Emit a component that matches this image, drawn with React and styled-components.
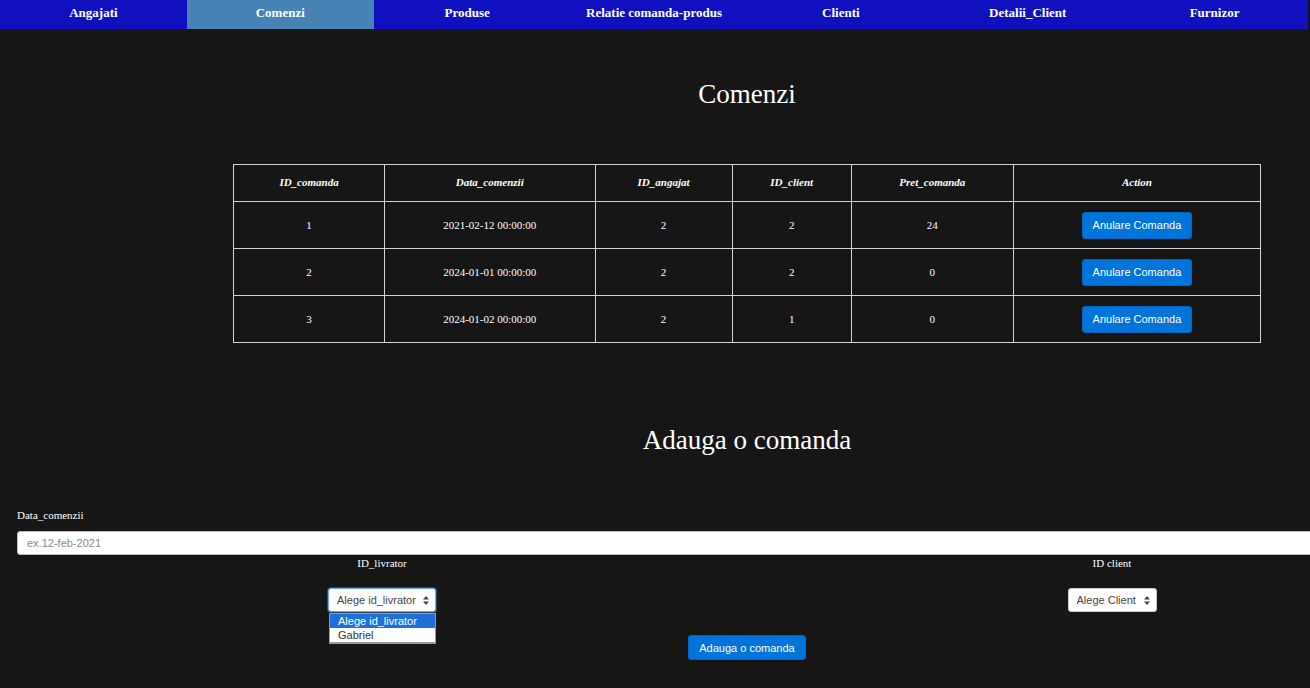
import React from 'react';
import styled, { createGlobalStyle } from 'styled-components';

const tabs = [
  'Angajati',
  'Comenzi',
  'Produse',
  'Relatie comanda-produs',
  'Clienti',
  'Detalii_Client',
  'Furnizor',
];

const columns = [
  { title: 'ID_comanda', width: 151 },
  { title: 'Data_comenzii', width: 211 },
  { title: 'ID_angajat', width: 137 },
  { title: 'ID_client', width: 119 },
  { title: 'Pret_comanda', width: 162 },
  { title: 'Action', width: 248 },
];

const orders = [
  { id: 1, data: '2021-02-12 00:00:00', angajat: 2, client: 2, pret: 24 },
  { id: 2, data: '2024-01-01 00:00:00', angajat: 2, client: 2, pret: 0 },
  { id: 3, data: '2024-01-02 00:00:00', angajat: 2, client: 1, pret: 0 },
];

const Caret = () => (
  <svg width='6' height='9' viewBox='0 0 6 9'>
    <path d='M3 0 L6 3.5 H0 Z M3 9 L6 5.5 H0 Z' fill='#444' />
  </svg>
);

const App = () => {
  return (
    <>
      <GlobalStyle />
      <Screen>
        <Nav>
          {tabs.map((t) => (
            <NavItem key={t} $active={t === 'Comenzi'}>
              {t}
            </NavItem>
          ))}
        </Nav>
        <Page>
          <Title>Comenzi</Title>
          <Table>
            <thead>
              <tr>
                {columns.map((c) => (
                  <Th key={c.title} $width={c.width}>
                    {c.title}
                  </Th>
                ))}
              </tr>
            </thead>
            <tbody>
              {orders.map((o) => (
                <tr key={o.id}>
                  <Td>{o.id}</Td>
                  <Td>{o.data}</Td>
                  <Td>{o.angajat}</Td>
                  <Td>{o.client}</Td>
                  <Td>{o.pret}</Td>
                  <Td>
                    <BlueButton>Anulare Comanda</BlueButton>
                  </Td>
                </tr>
              ))}
            </tbody>
          </Table>

          <Title $gap={82}>Adauga o comanda</Title>
          <Form>
            <Label>Data_comenzii</Label>
            <TextInput placeholder='ex.12-feb-2021' />
            <Pickers>
              <Picker>
                <Label>ID_livrator</Label>
                <SelectWrap>
                  <Select $focused>
                    <option>Alege id_livrator</option>
                    <option>Gabriel</option>
                  </Select>
                  <CaretSpot>
                    <Caret />
                  </CaretSpot>
                  <Options>
                    <Option $selected>Alege id_livrator</Option>
                    <Option>Gabriel</Option>
                  </Options>
                </SelectWrap>
              </Picker>
              <Picker>
                <Label>ID client</Label>
                <SelectWrap>
                  <Select>
                    <option>Alege Client</option>
                  </Select>
                  <CaretSpot>
                    <Caret />
                  </CaretSpot>
                </SelectWrap>
              </Picker>
            </Pickers>
            <SubmitRow>
              <BlueButton $height={25}>Adauga o comanda</BlueButton>
            </SubmitRow>
          </Form>
        </Page>
      </Screen>
    </>
  );
};

const GlobalStyle = createGlobalStyle`
  html, body {
    margin: 0;
    background: #161616;
    overflow: hidden;
  }
  body {
    font-family: "Liberation Serif", "Times New Roman", serif;
    color: #fff;
  }
`;

const Screen = styled.div`
  width: 1310px;
  height: 688px;
  overflow: hidden;
  background: #161616;
`;

const Nav = styled.nav`
  display: grid;
  grid-template-columns: repeat(7, 1fr);
  width: 1308px;
  height: 29px;
  background: #1010bf;
`;

const NavItem = styled.div`
  display: flex;
  align-items: center;
  justify-content: center;
  padding-bottom: 3px;
  font-size: 13px;
  font-weight: bold;
  color: #fff;
  background: ${(p) => (p.$active ? '#4682b4' : 'transparent')};
`;

const Page = styled.main`
  width: 1460px;
  margin-left: 17px;
`;

const Title = styled.h2`
  margin: ${(p) => p.$gap || 50}px 0 0;
  font-size: 27px;
  line-height: 31px;
  font-weight: normal;
  text-align: center;
  color: #fff;
`;

const Table = styled.table`
  width: 1028px;
  margin: 54px auto 0;
  border-collapse: collapse;
  font-size: 11px;
  color: #fff;
  th,
  td {
    border: 1px solid #d4d4d4;
    text-align: center;
  }
`;

const Th = styled.th`
  width: ${(p) => p.$width}px;
  height: 34px;
  padding: 0 0 2px;
  font-style: italic;
  font-weight: bold;
`;

const Td = styled.td`
  height: 46px;
  padding: 0;
`;

const BlueButton = styled.button`
  height: ${(p) => p.$height || 27}px;
  padding: 0 10px;
  border: 1px solid #0068c4;
  border-radius: 3px;
  background: #0074d9;
  color: #fff;
  font-family: "Liberation Sans", Arial, sans-serif;
  font-size: 11px;
  cursor: pointer;
`;

const Form = styled.form`
  display: flex;
  flex-direction: column;
  margin-top: 53px;
`;

const Label = styled.label`
  display: block;
  font-size: 11px;
  line-height: 13px;
  color: #fff;
`;

const TextInput = styled.input`
  box-sizing: border-box;
  width: 100%;
  height: 24px;
  margin-top: 9px;
  padding: 0 9px;
  border: 1px solid #bbb;
  border-radius: 3px;
  background: #fff;
  font-family: "Liberation Sans", Arial, sans-serif;
  font-size: 11px;
  &::placeholder {
    color: #8a8a8a;
  }
`;

const Pickers = styled.div`
  display: grid;
  grid-template-columns: 1fr 1fr;
  margin-top: 2px;
`;

const Picker = styled.div`
  display: flex;
  flex-direction: column;
  align-items: center;
  gap: 18px;
`;

const SelectWrap = styled.div`
  position: relative;
`;

const Select = styled.select`
  appearance: none;
  height: 24px;
  padding: 0 19px 0 8px;
  border: 1px solid ${(p) => (p.$focused ? '#6ea6e6' : '#ccc')};
  border-radius: 3px;
  background: #fff;
  color: #444;
  font-family: "Liberation Sans", Arial, sans-serif;
  font-size: 11px;
  box-shadow: ${(p) => (p.$focused ? '0 0 0 1px rgba(110,166,230,0.35)' : 'none')};
`;

const CaretSpot = styled.span`
  position: absolute;
  right: 7px;
  top: 8px;
  display: flex;
  pointer-events: none;
`;

const Options = styled.ul`
  position: absolute;
  top: 25px;
  left: 1px;
  right: 0;
  margin: 0;
  padding: 0;
  list-style: none;
  background: #fff;
  border: 1px solid #999;
  border-bottom-width: 2px;
  font-family: "Liberation Sans", Arial, sans-serif;
  font-size: 11px;
`;

const Option = styled.li`
  height: 14px;
  line-height: 14px;
  padding: 0 8px;
  background: ${(p) => (p.$selected ? '#1e6fd9' : '#fff')};
  color: ${(p) => (p.$selected ? '#fff' : '#333')};
`;

const SubmitRow = styled.div`
  display: flex;
  justify-content: center;
  margin-top: 23px;
`;

export default App;
